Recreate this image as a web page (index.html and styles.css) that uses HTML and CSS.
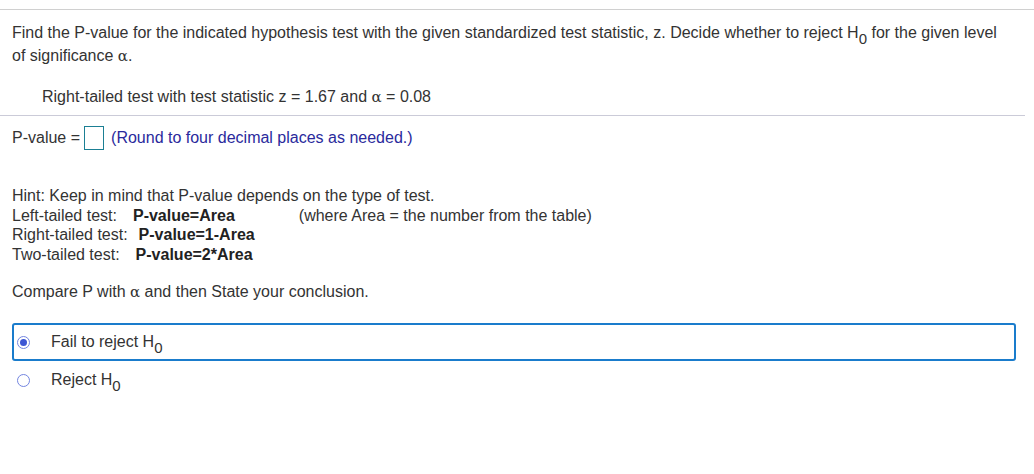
FILE: index.html
```html
<!DOCTYPE html>
<html>
<head>
<meta charset="utf-8">
<link rel="stylesheet" href="styles.css">
</head>
<body>
<div class="page">
  <div class="rule-top"></div>
  <div class="question">
    <p class="stem">Find the P-value for the indicated hypothesis test with the given standardized test statistic, z. Decide whether to reject H<sub>0</sub> for the given level of significance <span class="greek">α</span>.</p>
    <p class="given">Right-tailed test with test statistic z = 1.67 and <span class="greek">α</span> = 0.08</p>
  </div>
  <div class="rule-mid"></div>
  <div class="answer-row">
    <span>P-value =</span>
    <span class="input-box"></span>
    <span class="note">(Round to four decimal places as needed.)</span>
  </div>
  <div class="hint">
    <div>Hint: Keep in mind that P-value depends on the type of test.</div>
    <div class="hint-line"><span class="lbl">Left-tailed test:</span><b class="f1">P-value=Area</b><span class="where">(where Area = the number from the table)</span></div>
    <div class="hint-line"><span class="lbl">Right-tailed test:</span><b class="f2">P-value=1-Area</b></div>
    <div class="hint-line"><span class="lbl">Two-tailed test:</span><b class="f3">P-value=2*Area</b></div>
  </div>
  <p class="compare">Compare P with <span class="greek">α</span> and then State your conclusion.</p>
  <div class="options">
    <div class="option selected"><span class="radio on"></span><span class="opt-text">Fail to reject H<sub>0</sub></span></div>
    <div class="option"><span class="radio"></span><span class="opt-text">Reject H<sub>0</sub></span></div>
  </div>
</div>
</body>
</html>
```
FILE: styles.css
```css
html, body {
  margin: 0;
  padding: 0;
  background: #fff;
}
body {
  font-family: "Liberation Sans", Arial, sans-serif;
  font-size: 16px;
  color: #333;
}
.page {
  padding-top: 9px;
}
.rule-top {
  border-top: 1px solid #d0d0d0;
}
.question {
  padding: 11px 12px 0 12px;
}
p { margin: 0; }
.stem {
  line-height: 23px;
  padding-right: 10px;
}
sub {
  font-size: 15px;
  vertical-align: -6px;
  line-height: 0;
}
.greek {
  font-family: "DejaVu Serif", serif;
  font-size: 15px;
}
.given {
  margin-top: 17px;
  padding-left: 30px;
  line-height: 23px;
}
.rule-mid {
  margin-top: 6px;
  margin-right: 9px;
  border-top: 1px solid #cbcbd8;
}
.answer-row {
  display: flex;
  align-items: center;
  padding: 10px 12px 0 12px;
  height: 24px;
}
.input-box {
  display: inline-block;
  width: 18px;
  height: 22px;
  border: 1px solid #1b7f94;
  margin-left: 4px;
  margin-right: 7px;
}
.note {
  color: #2a2a9c;
}
.hint {
  margin-top: 36px;
  padding-left: 12px;
  line-height: 19.5px;
}
.hint-line b {
  font-weight: bold;
  color: #222;
}
.f1 { margin-left: 16px; }
.f2 { margin-left: 11px; }
.f3 { margin-left: 16px; }
.where { margin-left: 64px; }
.compare {
  margin-top: 18px;
  padding-left: 12px;
  line-height: 19px;
}
.options {
  margin-top: 21px;
  padding: 0 18px 0 12px;
}
.option {
  display: flex;
  align-items: center;
  height: 38px;
  padding-left: 3px;
  border: 2px solid transparent;
  border-radius: 3px;
  box-sizing: border-box;
}
.option.selected {
  border-color: #1a7ccc;
}
.radio {
  flex: none;
  width: 11px;
  height: 11px;
  border: 1.5px solid #7385e0;
  border-radius: 50%;
  position: relative;
  box-sizing: content-box;
}
.radio.on::after {
  content: "";
  position: absolute;
  left: 2px;
  top: 2px;
  width: 7px;
  height: 7px;
  border-radius: 50%;
  background: #3c56d4;
}
.opt-text {
  margin-left: 21px;
}
```
